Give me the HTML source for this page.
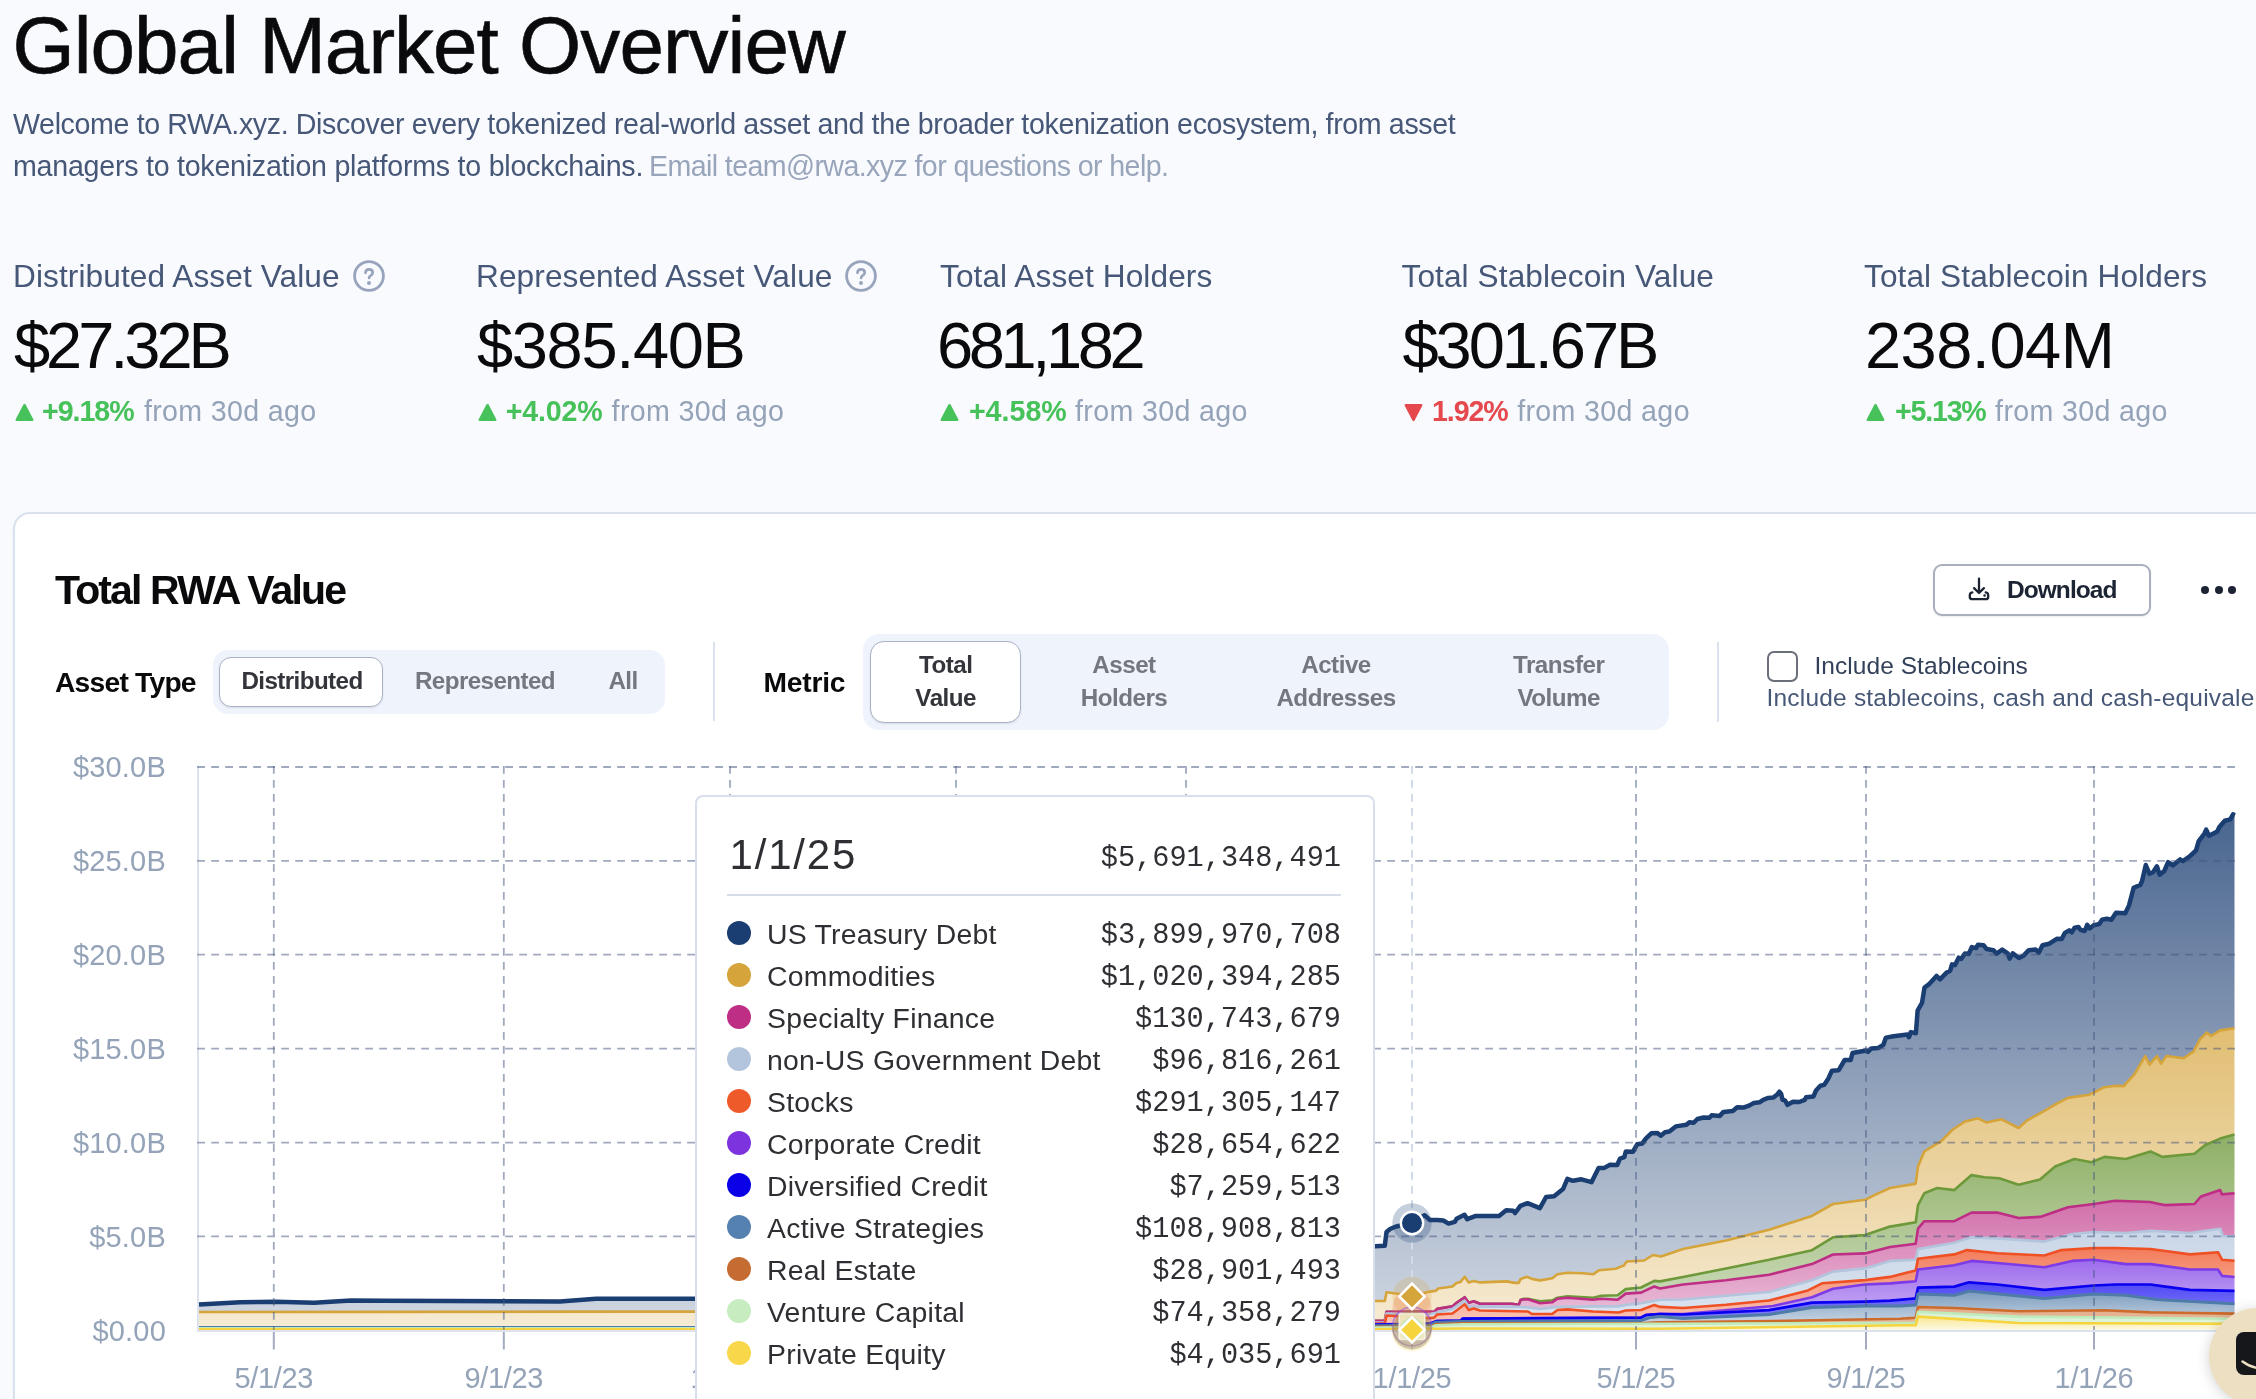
<!DOCTYPE html>
<html><head><meta charset="utf-8"><title>Global Market Overview</title>
<style>
html,body{margin:0;padding:0}
body{width:2256px;height:1399px;overflow:hidden;position:relative;background:#f8fafe;font-family:"Liberation Sans",sans-serif}
</style></head><body>
<div style="position:absolute;left:0;top:0;width:2256px;height:1399px;overflow:hidden;will-change:transform">
<div style="position:absolute;left:12.5px;top:5.8px;font-size:80px;line-height:80px;color:#0a0a0c;font-weight:400;letter-spacing:-0.97px;font-family:'Liberation Sans', sans-serif;white-space:nowrap;-webkit-text-stroke:0.6px #0a0a0c;">Global Market Overview</div>
<div style="position:absolute;left:13.0px;top:109.8px;font-size:28.6px;line-height:28.6px;color:#475777;font-weight:400;letter-spacing:-0.37px;font-family:'Liberation Sans', sans-serif;white-space:nowrap;">Welcome to RWA.xyz. Discover every tokenized real-world asset and the broader tokenization ecosystem, from asset</div>
<div style="position:absolute;left:13.0px;top:151.8px;font-size:28.6px;line-height:28.6px;color:#475777;font-weight:400;letter-spacing:-0.24px;font-family:'Liberation Sans', sans-serif;white-space:nowrap;">managers to tokenization platforms to blockchains.</div>
<div style="position:absolute;left:649.0px;top:151.8px;font-size:28.6px;line-height:28.6px;color:#98a5bb;font-weight:400;letter-spacing:-0.6px;font-family:'Liberation Sans', sans-serif;white-space:nowrap;">Email team@rwa.xyz for questions or help.</div>
<div style="position:absolute;left:13.0px;top:261.1px;font-size:31.6px;line-height:31.6px;color:#475777;font-weight:400;letter-spacing:0.1px;font-family:'Liberation Sans', sans-serif;white-space:nowrap;">Distributed Asset Value</div>
<div style="position:absolute;left:14.0px;top:313.4px;font-size:65px;line-height:65px;color:#0a0a0c;font-weight:400;letter-spacing:-4.05px;font-family:'Liberation Sans', sans-serif;white-space:nowrap;">$27.32B</div>
<svg style="position:absolute;left:15px;top:403px" width="19" height="19" viewBox="0 0 19 19"><path d="M9.5 1 Q10 0.5 10.6 1.4 L18.4 16.5 Q18.8 18 17.2 18 L1.8 18 Q0.2 18 0.6 16.5 L8.4 1.4 Z" fill="#47c25a"/></svg>
<div style="position:absolute;left:42.0px;top:397.4px;font-size:28.6px;line-height:28.6px;color:#47c25a;font-weight:600;letter-spacing:-1.02px;font-family:'Liberation Sans', sans-serif;white-space:nowrap;">+9.18%</div>
<div style="position:absolute;left:143.9px;top:397.4px;font-size:28.6px;line-height:28.6px;color:#94a3b8;font-weight:400;letter-spacing:0.35px;font-family:'Liberation Sans', sans-serif;white-space:nowrap;">from 30d ago</div>
<div style="position:absolute;left:476.0px;top:261.1px;font-size:31.6px;line-height:31.6px;color:#475777;font-weight:400;letter-spacing:0.1px;font-family:'Liberation Sans', sans-serif;white-space:nowrap;">Represented Asset Value</div>
<div style="position:absolute;left:477.0px;top:313.4px;font-size:65px;line-height:65px;color:#0a0a0c;font-weight:400;letter-spacing:-1.35px;font-family:'Liberation Sans', sans-serif;white-space:nowrap;">$385.40B</div>
<svg style="position:absolute;left:478px;top:403px" width="19" height="19" viewBox="0 0 19 19"><path d="M9.5 1 Q10 0.5 10.6 1.4 L18.4 16.5 Q18.8 18 17.2 18 L1.8 18 Q0.2 18 0.6 16.5 L8.4 1.4 Z" fill="#47c25a"/></svg>
<div style="position:absolute;left:505.8px;top:397.4px;font-size:28.6px;line-height:28.6px;color:#47c25a;font-weight:600;letter-spacing:-0.18px;font-family:'Liberation Sans', sans-serif;white-space:nowrap;">+4.02%</div>
<div style="position:absolute;left:611.6px;top:397.4px;font-size:28.6px;line-height:28.6px;color:#94a3b8;font-weight:400;letter-spacing:0.35px;font-family:'Liberation Sans', sans-serif;white-space:nowrap;">from 30d ago</div>
<div style="position:absolute;left:940.0px;top:261.1px;font-size:31.6px;line-height:31.6px;color:#475777;font-weight:400;letter-spacing:0.1px;font-family:'Liberation Sans', sans-serif;white-space:nowrap;">Total Asset Holders</div>
<div style="position:absolute;left:937.0px;top:313.4px;font-size:65px;line-height:65px;color:#0a0a0c;font-weight:400;letter-spacing:-4.4px;font-family:'Liberation Sans', sans-serif;white-space:nowrap;">681,182</div>
<svg style="position:absolute;left:940px;top:403px" width="19" height="19" viewBox="0 0 19 19"><path d="M9.5 1 Q10 0.5 10.6 1.4 L18.4 16.5 Q18.8 18 17.2 18 L1.8 18 Q0.2 18 0.6 16.5 L8.4 1.4 Z" fill="#47c25a"/></svg>
<div style="position:absolute;left:968.9px;top:397.4px;font-size:28.6px;line-height:28.6px;color:#47c25a;font-weight:600;letter-spacing:0.02px;font-family:'Liberation Sans', sans-serif;white-space:nowrap;">+4.58%</div>
<div style="position:absolute;left:1075.0px;top:397.4px;font-size:28.6px;line-height:28.6px;color:#94a3b8;font-weight:400;letter-spacing:0.35px;font-family:'Liberation Sans', sans-serif;white-space:nowrap;">from 30d ago</div>
<div style="position:absolute;left:1401.5px;top:261.1px;font-size:31.6px;line-height:31.6px;color:#475777;font-weight:400;letter-spacing:0.1px;font-family:'Liberation Sans', sans-serif;white-space:nowrap;">Total Stablecoin Value</div>
<div style="position:absolute;left:1402.5px;top:313.4px;font-size:65px;line-height:65px;color:#0a0a0c;font-weight:400;letter-spacing:-3.06px;font-family:'Liberation Sans', sans-serif;white-space:nowrap;">$301.67B</div>
<svg style="position:absolute;left:1403.5px;top:403px" width="19" height="19" viewBox="0 0 19 19"><path d="M9.5 18 Q10 18.5 10.6 17.6 L18.4 2.5 Q18.8 1 17.2 1 L1.8 1 Q0.2 1 0.6 2.5 L8.4 17.6 Z" fill="#e5484d"/></svg>
<div style="position:absolute;left:1432.0px;top:397.4px;font-size:28.6px;line-height:28.6px;color:#e5484d;font-weight:600;letter-spacing:-1.1px;font-family:'Liberation Sans', sans-serif;white-space:nowrap;">1.92%</div>
<div style="position:absolute;left:1517.2px;top:397.4px;font-size:28.6px;line-height:28.6px;color:#94a3b8;font-weight:400;letter-spacing:0.35px;font-family:'Liberation Sans', sans-serif;white-space:nowrap;">from 30d ago</div>
<div style="position:absolute;left:1864.0px;top:261.1px;font-size:31.6px;line-height:31.6px;color:#475777;font-weight:400;letter-spacing:0.1px;font-family:'Liberation Sans', sans-serif;white-space:nowrap;">Total Stablecoin Holders</div>
<div style="position:absolute;left:1865.0px;top:313.4px;font-size:65px;line-height:65px;color:#0a0a0c;font-weight:400;letter-spacing:-0.53px;font-family:'Liberation Sans', sans-serif;white-space:nowrap;">238.04M</div>
<svg style="position:absolute;left:1866px;top:403px" width="19" height="19" viewBox="0 0 19 19"><path d="M9.5 1 Q10 0.5 10.6 1.4 L18.4 16.5 Q18.8 18 17.2 18 L1.8 18 Q0.2 18 0.6 16.5 L8.4 1.4 Z" fill="#47c25a"/></svg>
<div style="position:absolute;left:1895.0px;top:397.4px;font-size:28.6px;line-height:28.6px;color:#47c25a;font-weight:600;letter-spacing:-1.2px;font-family:'Liberation Sans', sans-serif;white-space:nowrap;">+5.13%</div>
<div style="position:absolute;left:1995.1px;top:397.4px;font-size:28.6px;line-height:28.6px;color:#94a3b8;font-weight:400;letter-spacing:0.35px;font-family:'Liberation Sans', sans-serif;white-space:nowrap;">from 30d ago</div>
<svg style="position:absolute;left:353px;top:260px" width="32" height="32" viewBox="0 0 32 32"><circle cx="16" cy="16" r="14.4" fill="none" stroke="#98a4bc" stroke-width="2.8"/><path d="M12.5 12.8 Q12.6 9.3 16.1 9.3 Q19.7 9.3 19.7 12.6 Q19.7 14.6 17.6 15.6 Q16.1 16.4 16.1 18" fill="none" stroke="#98a4bc" stroke-width="2.7" stroke-linecap="round"/><circle cx="16" cy="22.9" r="2" fill="#98a4bc"/></svg>
<svg style="position:absolute;left:845px;top:260px" width="32" height="32" viewBox="0 0 32 32"><circle cx="16" cy="16" r="14.4" fill="none" stroke="#98a4bc" stroke-width="2.8"/><path d="M12.5 12.8 Q12.6 9.3 16.1 9.3 Q19.7 9.3 19.7 12.6 Q19.7 14.6 17.6 15.6 Q16.1 16.4 16.1 18" fill="none" stroke="#98a4bc" stroke-width="2.7" stroke-linecap="round"/><circle cx="16" cy="22.9" r="2" fill="#98a4bc"/></svg>
<div style="position:absolute;left:13px;top:512px;width:2400px;height:1200px;background:#fff;border:2px solid #dae1ee;border-radius:17px;box-shadow:0 1px 3px rgba(30,40,70,0.05)"></div>
<div style="position:absolute;left:55.0px;top:569.6px;font-size:41px;line-height:41px;color:#0a0a0c;font-weight:600;letter-spacing:-1.87px;font-family:'Liberation Sans', sans-serif;white-space:nowrap;">Total RWA Value</div>
<div style="position:absolute;left:1933px;top:564px;width:214px;height:48px;border:2px solid #a9afbd;border-radius:9px;background:#fff;box-shadow:0 1px 2px rgba(0,0,0,0.08)"></div>
<svg style="position:absolute;left:1966px;top:576px" width="26" height="26" viewBox="0 0 26 26"><path d="M13 2.6 V16.6 M8.1 12.1 L13 17 L17.9 12.1" fill="none" stroke="#1c2333" stroke-width="2.3" stroke-linecap="round" stroke-linejoin="round"/><path d="M6.3 16.3 Q3.8 16.6 3.8 19.2 V20.9 Q3.8 23.2 6.3 23.2 H19.7 Q22.2 23.2 22.2 20.9 V19.2 Q22.2 16.6 19.7 16.3" fill="none" stroke="#1c2333" stroke-width="2.3" stroke-linecap="round"/><circle cx="18.6" cy="19.5" r="1.3" fill="#1c2333"/></svg>
<div style="position:absolute;left:2007.0px;top:577.7px;font-size:24.5px;line-height:24.5px;color:#1c2333;font-weight:600;letter-spacing:-0.95px;font-family:'Liberation Sans', sans-serif;white-space:nowrap;">Download</div>
<div style="position:absolute;left:2201.0px;top:586.0px;width:8px;height:8px;border-radius:50%;background:#1c2333"></div>
<div style="position:absolute;left:2214.7px;top:586.0px;width:8px;height:8px;border-radius:50%;background:#1c2333"></div>
<div style="position:absolute;left:2228.0px;top:586.0px;width:8px;height:8px;border-radius:50%;background:#1c2333"></div>
<div style="position:absolute;left:55.0px;top:668.1px;font-size:28.2px;line-height:28.2px;color:#0a0a0c;font-weight:700;letter-spacing:-0.75px;font-family:'Liberation Sans', sans-serif;white-space:nowrap;">Asset Type</div>
<div style="position:absolute;left:213px;top:650px;width:452px;height:64px;background:#eff3fb;border-radius:15px"></div>
<div style="position:absolute;left:219px;top:656.5px;width:162px;height:48px;background:#fff;border:1.6px solid #a8b2c5;border-radius:12px;box-shadow:0 1px 2px rgba(20,30,60,0.10)"></div>
<div style="position:absolute;left:241.5px;top:669.3px;font-size:24.2px;line-height:24.2px;color:#33353b;font-weight:600;letter-spacing:-0.6px;font-family:'Liberation Sans', sans-serif;white-space:nowrap;">Distributed</div>
<div style="position:absolute;left:415.0px;top:669.3px;font-size:24.2px;line-height:24.2px;color:#75777e;font-weight:600;letter-spacing:-0.6px;font-family:'Liberation Sans', sans-serif;white-space:nowrap;">Represented</div>
<div style="position:absolute;left:608.5px;top:669.3px;font-size:24.2px;line-height:24.2px;color:#75777e;font-weight:600;letter-spacing:-0.6px;font-family:'Liberation Sans', sans-serif;white-space:nowrap;">All</div>
<div style="position:absolute;left:712.5px;top:642px;width:2px;height:79px;background:#dbe2ef"></div>
<div style="position:absolute;left:763.5px;top:668.1px;font-size:28.2px;line-height:28.2px;color:#0a0a0c;font-weight:700;letter-spacing:-0.2px;font-family:'Liberation Sans', sans-serif;white-space:nowrap;">Metric</div>
<div style="position:absolute;left:863px;top:634px;width:806px;height:96px;background:#eff3fb;border-radius:16px"></div>
<div style="position:absolute;left:870px;top:640.5px;width:149px;height:80px;background:#fff;border:1.6px solid #a8b2c5;border-radius:14px;box-shadow:0 1px 2px rgba(20,30,60,0.10)"></div>
<div style="position:absolute;left:745.7px;width:400px;text-align:center;top:653.2px;font-size:24.2px;line-height:24.2px;color:#33353b;font-weight:600;letter-spacing:-0.5px;font-family:'Liberation Sans', sans-serif;white-space:nowrap">Total</div>
<div style="position:absolute;left:745.7px;width:400px;text-align:center;top:685.5px;font-size:24.2px;line-height:24.2px;color:#33353b;font-weight:600;letter-spacing:-0.5px;font-family:'Liberation Sans', sans-serif;white-space:nowrap">Value</div>
<div style="position:absolute;left:924.0px;width:400px;text-align:center;top:653.2px;font-size:24.2px;line-height:24.2px;color:#75777e;font-weight:600;letter-spacing:-0.5px;font-family:'Liberation Sans', sans-serif;white-space:nowrap">Asset</div>
<div style="position:absolute;left:924.0px;width:400px;text-align:center;top:685.5px;font-size:24.2px;line-height:24.2px;color:#75777e;font-weight:600;letter-spacing:-0.5px;font-family:'Liberation Sans', sans-serif;white-space:nowrap">Holders</div>
<div style="position:absolute;left:1136.0px;width:400px;text-align:center;top:653.2px;font-size:24.2px;line-height:24.2px;color:#75777e;font-weight:600;letter-spacing:-0.5px;font-family:'Liberation Sans', sans-serif;white-space:nowrap">Active</div>
<div style="position:absolute;left:1136.0px;width:400px;text-align:center;top:685.5px;font-size:24.2px;line-height:24.2px;color:#75777e;font-weight:600;letter-spacing:-0.5px;font-family:'Liberation Sans', sans-serif;white-space:nowrap">Addresses</div>
<div style="position:absolute;left:1358.7px;width:400px;text-align:center;top:653.2px;font-size:24.2px;line-height:24.2px;color:#75777e;font-weight:600;letter-spacing:-0.5px;font-family:'Liberation Sans', sans-serif;white-space:nowrap">Transfer</div>
<div style="position:absolute;left:1358.7px;width:400px;text-align:center;top:685.5px;font-size:24.2px;line-height:24.2px;color:#75777e;font-weight:600;letter-spacing:-0.5px;font-family:'Liberation Sans', sans-serif;white-space:nowrap">Volume</div>
<div style="position:absolute;left:1716.7px;top:642px;width:2px;height:80px;background:#dbe2ef"></div>
<div style="position:absolute;left:1767px;top:650.5px;width:27px;height:27px;border:2px solid #6b6f7a;border-radius:7px;background:#fff"></div>
<div style="position:absolute;left:1814.5px;top:653.6px;font-size:24.5px;line-height:24.5px;color:#334059;font-weight:400;letter-spacing:0.05px;font-family:'Liberation Sans', sans-serif;white-space:nowrap;">Include Stablecoins</div>
<div style="position:absolute;left:1766.5px;top:685.6px;font-size:24.5px;line-height:24.5px;color:#475777;font-weight:400;letter-spacing:0.2px;font-family:'Liberation Sans', sans-serif;white-space:nowrap;">Include stablecoins, cash and cash-equivalents</div>

<svg style="position:absolute;left:0;top:0" width="2256" height="1399" viewBox="0 0 2256 1399"><defs><linearGradient id="g_navy" x1="0" y1="0" x2="0" y2="1"><stop offset="0" stop-color="#1b3e72" stop-opacity="0.8"/><stop offset="1" stop-color="#1b3e72" stop-opacity="0.22"/></linearGradient><linearGradient id="g_gold" x1="0" y1="0" x2="0" y2="1"><stop offset="0" stop-color="#d5a43a" stop-opacity="0.72"/><stop offset="1" stop-color="#d5a43a" stop-opacity="0.22"/></linearGradient><linearGradient id="g_green" x1="0" y1="0" x2="0" y2="1"><stop offset="0" stop-color="#6e993a" stop-opacity="0.78"/><stop offset="1" stop-color="#6e993a" stop-opacity="0.3"/></linearGradient><linearGradient id="g_magenta" x1="0" y1="0" x2="0" y2="1"><stop offset="0" stop-color="#bd2e84" stop-opacity="0.72"/><stop offset="1" stop-color="#bd2e84" stop-opacity="0.28"/></linearGradient><linearGradient id="g_nonus" x1="0" y1="0" x2="0" y2="1"><stop offset="0" stop-color="#b3c5dd" stop-opacity="0.7"/><stop offset="1" stop-color="#b3c5dd" stop-opacity="0.45"/></linearGradient><linearGradient id="g_orange" x1="0" y1="0" x2="0" y2="1"><stop offset="0" stop-color="#ef5024" stop-opacity="0.75"/><stop offset="1" stop-color="#ef5024" stop-opacity="0.3"/></linearGradient><linearGradient id="g_purple" x1="0" y1="0" x2="0" y2="1"><stop offset="0" stop-color="#7c3be6" stop-opacity="0.75"/><stop offset="1" stop-color="#7c3be6" stop-opacity="0.35"/></linearGradient><linearGradient id="g_blue" x1="0" y1="0" x2="0" y2="1"><stop offset="0" stop-color="#0a00f0" stop-opacity="0.72"/><stop offset="1" stop-color="#0a00f0" stop-opacity="0.45"/></linearGradient><linearGradient id="g_steel" x1="0" y1="0" x2="0" y2="1"><stop offset="0" stop-color="#4f7ba8" stop-opacity="0.75"/><stop offset="1" stop-color="#4f7ba8" stop-opacity="0.25"/></linearGradient><linearGradient id="g_brown" x1="0" y1="0" x2="0" y2="1"><stop offset="0" stop-color="#cc6b2c" stop-opacity="0.55"/><stop offset="1" stop-color="#cc6b2c" stop-opacity="0.45"/></linearGradient><linearGradient id="g_lgreen" x1="0" y1="0" x2="0" y2="1"><stop offset="0" stop-color="#bfeabb" stop-opacity="0.6"/><stop offset="1" stop-color="#bfeabb" stop-opacity="0.5"/></linearGradient><linearGradient id="g_yellow" x1="0" y1="0" x2="0" y2="1"><stop offset="0" stop-color="#f6d43e" stop-opacity="0.55"/><stop offset="1" stop-color="#f6d43e" stop-opacity="0.15"/></linearGradient></defs><line x1="198" y1="766" x2="198" y2="1331" stroke="#dde3ee" stroke-width="2"/><path d="M199 1304.6 L240 1302.3 L276 1301.7 L314 1302.8 L351 1300.5 L450 1301 L560 1301.4 L596 1298.7 L695 1298.7 L1375 1246.2 L1384.8 1245.8 L1386.5 1232 L1390.1 1229 L1395.4 1226.7 L1400 1225.7 L1412 1223 L1424.6 1215.2 L1430 1220.1 L1436.1 1220.1 L1437.1 1220.1 L1438.2 1220.2 L1443.3 1220.5 L1448.6 1223.6 L1452.4 1222.6 L1454.8 1221.9 L1456.5 1219 L1456.6 1218.8 L1460.6 1216.8 L1464.5 1214.8 L1464.7 1215.1 L1467.2 1219.2 L1468.7 1218.6 L1473.8 1216.6 L1475.2 1216.1 L1480 1216.1 L1499.1 1216.1 L1506.2 1210.3 L1506.5 1210.3 L1513.3 1210.8 L1514.6 1212.4 L1515.1 1213 L1518.7 1208.2 L1520.4 1205.9 L1520.7 1205.8 L1526.8 1203.5 L1527.5 1203.2 L1531.9 1204.9 L1539.9 1208.1 L1540.1 1207.7 L1546.1 1197 L1552.3 1196.4 L1554.1 1196.2 L1557.4 1193.6 L1563 1189.1 L1567.4 1178.9 L1567.6 1179 L1572.9 1180.8 L1581.4 1179.3 L1582.9 1179.7 L1591.5 1182.2 L1593.1 1179 L1598.6 1167.9 L1599.2 1167.9 L1604.3 1167.9 L1610 1164.7 L1615.5 1164.9 L1617.2 1165 L1620 1158.6 L1623.7 1157.4 L1624.3 1157.2 L1625.8 1151.5 L1626.8 1151.5 L1632.9 1151.8 L1637.2 1144.3 L1642.2 1143.6 L1644.1 1141 L1645.8 1138.6 L1651.5 1133.2 L1653 1133.1 L1657.2 1132.9 L1660.8 1135.7 L1661 1135.5 L1665 1132.2 L1669.4 1131.5 L1675.8 1126.4 L1683 1125.3 L1686.5 1124.7 L1689.4 1122.2 L1693.7 1122.8 L1697.4 1119 L1703.7 1117.5 L1709.2 1117.8 L1711.7 1115.3 L1719.8 1115.9 L1723.5 1111.9 L1726 1111.7 L1732.8 1111 L1737.2 1107.2 L1743.4 1107.6 L1749.6 1105.4 L1753.9 1102.9 L1759.5 1102.3 L1763.2 1099.8 L1768.2 1097.9 L1769 1097.9 L1773.2 1097.6 L1776.9 1094.8 L1779.4 1091.7 L1781.2 1093.9 L1782.5 1099.8 L1785 1100.4 L1787.5 1104.8 L1793 1101.7 L1799.2 1102 L1804.8 1099.8 L1806.1 1097.3 L1812 1096.6 L1813.5 1096.4 L1816 1090.5 L1820.4 1085.8 L1824.1 1084.9 L1828.4 1078.4 L1831.9 1070.7 L1833 1070.6 L1838.7 1070.2 L1844.7 1060 L1850.7 1060 L1852.5 1053 L1865 1050.7 L1866.2 1050.5 L1867.9 1051.8 L1871.3 1048.4 L1876 1048.1 L1878.2 1048 L1883.3 1044.9 L1885.9 1037.6 L1890 1036.9 L1893.6 1036.3 L1907.4 1034.6 L1909 1037.2 L1910.8 1032.1 L1915.7 1033.3 L1915.9 1033.3 L1917.6 1010.6 L1918 1009.9 L1922 1002.9 L1924.3 988.7 L1924.5 987.5 L1928.8 984.4 L1936.5 975.9 L1940 979.3 L1941.5 977.8 L1946.8 972.4 L1950.2 970.7 L1952 964.3 L1952.2 964.4 L1955 965.1 L1958.7 957.7 L1961.2 958.9 L1964.9 953.4 L1965 953.4 L1968.7 954 L1971.8 947.1 L1976.1 948.1 L1978 944.7 L1983.5 945.3 L1986.5 948.9 L1986.6 949 L1993.5 950.2 L1996.6 953.7 L2001.5 950.1 L2002.2 949.6 L2007.7 953.3 L2009.6 958.6 L2012.7 953.3 L2018.6 957.8 L2018.9 958 L2023.3 955.8 L2027.2 951.8 L2028.8 950.2 L2035.7 949.6 L2038.8 952.7 L2042.5 945.3 L2044.4 944.9 L2049.3 943.7 L2056.8 938.8 L2057.2 938.8 L2061.7 939.1 L2064.8 932.9 L2068 931.1 L2069.2 930.4 L2071.7 932.3 L2074.8 927.6 L2078.5 927 L2080.4 929.8 L2084.7 931 L2087.2 924.8 L2089.4 928.1 L2089.7 928.5 L2094 925 L2095.6 924.9 L2099.3 924 L2102.1 919.8 L2104.4 919.3 L2106.7 918.8 L2111.4 919.8 L2116 912.8 L2123.7 913.2 L2125.3 913.3 L2129 905.4 L2133.7 887.7 L2134.4 887.4 L2140.2 884.9 L2142 881.2 L2145.2 867.6 L2145.8 865 L2149.5 873.8 L2153.2 871.9 L2156.9 866.3 L2157 866.6 L2159.7 874.7 L2161 873.7 L2164.3 871 L2166.6 865.7 L2168.1 862.2 L2172.7 865.4 L2180.1 859.4 L2182.9 861.2 L2183.7 860.6 L2189.4 856.6 L2193.5 852.8 L2196 850.5 L2198.7 841.2 L2200 839.5 L2204.3 833.8 L2206.2 829.6 L2206.8 830.9 L2209 835.7 L2211 834.7 L2217.3 831.5 L2219.2 827.3 L2220 826.4 L2224.8 820.8 L2230.3 819.4 L2233.1 814.3 L2234.5 815.5 L2234.5 1028.2 L2233.1 1028.4 L2230.3 1028.8 L2224.8 1029.7 L2220 1030.4 L2219.2 1030.9 L2217.3 1032.1 L2211 1036 L2209 1034.4 L2206.8 1032.6 L2206.2 1033.2 L2204.3 1035.1 L2200 1039.3 L2198.7 1041.7 L2196 1046.8 L2193.5 1051.5 L2189.4 1054.3 L2183.7 1058.2 L2182.9 1058.1 L2180.1 1057.7 L2172.7 1056.8 L2168.1 1056.2 L2166.6 1056 L2164.3 1059.1 L2161 1063.6 L2159.7 1061.2 L2157 1056.1 L2156.9 1056.2 L2153.2 1060.5 L2149.5 1064.7 L2145.8 1057.3 L2145.2 1056.1 L2142 1061.5 L2140.2 1064.5 L2134.4 1074.3 L2133.7 1075.1 L2129 1080.3 L2125.3 1084.3 L2123.7 1086.1 L2116 1085.8 L2111.4 1086.4 L2106.7 1086.9 L2104.4 1087.2 L2102.1 1088.4 L2099.3 1089.8 L2095.6 1091.6 L2094 1092.4 L2089.7 1094.6 L2089.4 1094.7 L2087.2 1095 L2084.7 1095.4 L2080.4 1096 L2078.5 1096.3 L2074.8 1096.9 L2071.7 1097.3 L2069.2 1097.7 L2068 1097.9 L2064.8 1099.5 L2061.7 1101 L2057.2 1103.3 L2056.8 1103.5 L2049.3 1107.9 L2044.4 1110.8 L2042.5 1111.9 L2038.8 1113.9 L2035.7 1115.7 L2028.8 1119.5 L2027.2 1120.4 L2023.3 1123.8 L2018.9 1127.7 L2018.6 1128 L2012.7 1125 L2009.6 1123.4 L2007.7 1122.5 L2002.2 1119.7 L2001.5 1119.3 L1996.6 1120.4 L1993.5 1121.1 L1986.6 1122.6 L1986.5 1122.6 L1983.5 1121.1 L1978 1118.3 L1976.1 1118.8 L1971.8 1119.8 L1968.7 1120.6 L1965 1121.5 L1964.9 1121.6 L1961.2 1124 L1958.7 1125.7 L1955 1128.1 L1952.2 1130 L1952 1130.2 L1950.2 1132 L1946.8 1135.5 L1941.5 1140.8 L1940 1141.7 L1936.5 1143.9 L1928.8 1148.7 L1924.5 1151.4 L1924.3 1151.5 L1922 1157 L1918 1166.5 L1917.6 1169.5 L1915.9 1182.2 L1915.7 1183.7 L1910.8 1184.5 L1909 1184.8 L1907.4 1185.1 L1893.6 1187.4 L1890 1188 L1885.9 1189.9 L1883.3 1191.1 L1878.2 1193.4 L1876 1194.4 L1871.3 1196.7 L1867.9 1198.4 L1866.2 1199.2 L1865 1199.8 L1852.5 1201.4 L1850.7 1201.7 L1844.7 1202.5 L1838.7 1203.3 L1833 1204 L1831.9 1204.6 L1828.4 1206.6 L1824.1 1209 L1820.4 1211.1 L1816 1213.6 L1813.5 1215.1 L1812 1215.9 L1806.1 1217.8 L1804.8 1218.2 L1799.2 1220 L1793 1222 L1787.5 1223.8 L1785 1224.6 L1782.5 1225.4 L1781.2 1225.9 L1779.4 1226.4 L1776.9 1227.2 L1773.2 1228.4 L1769 1229.8 L1768.2 1230 L1763.2 1231.2 L1759.5 1232.2 L1753.9 1233.6 L1749.6 1234.6 L1743.4 1236.2 L1737.2 1237.7 L1732.8 1238.8 L1726 1240.5 L1723.5 1241 L1719.8 1241.7 L1711.7 1243.4 L1709.2 1243.9 L1703.7 1245 L1697.4 1246.2 L1693.7 1247 L1689.4 1247.8 L1686.5 1248.4 L1683 1249.1 L1675.8 1251.6 L1669.4 1253.7 L1665 1255.2 L1661 1256.6 L1660.8 1256.6 L1657.2 1255.8 L1653 1255 L1651.5 1255.9 L1645.8 1259.4 L1644.1 1260.5 L1642.2 1260.6 L1637.2 1260.9 L1632.9 1261.1 L1626.8 1261.5 L1625.8 1262.8 L1624.3 1264.8 L1623.7 1265.6 L1620 1267 L1617.2 1268.1 L1615.5 1268.7 L1610 1269.2 L1604.3 1269.7 L1599.2 1270.2 L1598.6 1270.6 L1593.1 1274.3 L1591.5 1274.1 L1582.9 1273.3 L1581.4 1273.2 L1572.9 1272.9 L1567.6 1272.7 L1567.4 1272.7 L1563 1273.4 L1557.4 1274.3 L1554.1 1276.9 L1552.3 1278.3 L1546.1 1279.4 L1540.1 1280.4 L1539.9 1280.4 L1531.9 1278.9 L1527.5 1277.1 L1526.8 1276.8 L1520.7 1278.9 L1520.4 1279.5 L1518.7 1282.9 L1515.1 1282.9 L1514.6 1282.9 L1513.3 1282.7 L1506.5 1281.4 L1506.2 1281.4 L1499.1 1281.7 L1480 1282.4 L1475.2 1281.2 L1473.8 1280.9 L1468.7 1282.4 L1467.2 1280.3 L1464.7 1276.8 L1464.5 1277 L1460.6 1281.9 L1456.6 1282.9 L1456.5 1282.9 L1454.8 1284.4 L1452.4 1286.5 L1448.6 1287 L1443.3 1287.8 L1438.2 1288.5 L1437.1 1289.6 L1436.1 1290.6 L1430 1291.6 L1424.6 1292.9 L1412 1296 L1400 1294 L1395.4 1293.4 L1390.1 1292.8 L1386.5 1292.3 L1384.8 1301 L1375 1301 L695 1311.6 L596 1311.7 L560 1311.7 L450 1311.8 L351 1311.9 L314 1311.9 L276 1311.9 L240 1312 L199 1312 Z" fill="url(#g_navy)"/><path d="M199 1312 L695 1311.6 L1375 1301 L1384.8 1301 L1386.5 1292.3 L1400 1294 L1412 1296 L1430 1291.6 L1434.1 1290.9 L1436.1 1290.6 L1437.1 1289.6 L1438.2 1288.5 L1452.4 1286.5 L1456.5 1282.9 L1460.6 1281.9 L1464.7 1276.8 L1468.7 1282.4 L1473.8 1280.9 L1480 1282.4 L1506.5 1281.4 L1511.6 1282.3 L1514.6 1282.9 L1518.7 1282.9 L1520.7 1278.9 L1523.8 1277.8 L1526.8 1276.8 L1527.9 1277.3 L1531.9 1278.9 L1540.1 1280.4 L1552.3 1278.3 L1557.4 1274.3 L1567.6 1272.7 L1582.9 1273.3 L1593.1 1274.3 L1599.2 1270.2 L1601.3 1270 L1615.5 1268.7 L1617.6 1267.9 L1623.7 1265.6 L1625.7 1263 L1626.8 1261.5 L1641 1260.7 L1644.1 1260.5 L1653 1255 L1654.3 1255.3 L1660 1256.4 L1661 1256.6 L1683 1249.1 L1726 1240.5 L1769 1229.8 L1812 1215.9 L1833 1204 L1865 1199.8 L1876 1194.4 L1890 1188 L1915.7 1183.7 L1918 1166.5 L1924.3 1151.5 L1937.2 1143.5 L1941.5 1140.8 L1952.2 1130 L1954.3 1128.6 L1965 1121.5 L1971.5 1119.9 L1978 1118.3 L1984.3 1121.5 L1986.5 1122.6 L1999.3 1119.8 L2001.5 1119.3 L2018.6 1128 L2027.2 1120.4 L2040 1113.3 L2044.4 1110.8 L2055.1 1104.5 L2057.2 1103.3 L2068 1097.9 L2074.4 1096.9 L2089.4 1094.7 L2091.5 1093.7 L2104.4 1087.2 L2116 1085.8 L2123.7 1086.1 L2125.8 1083.8 L2134.4 1074.3 L2145.2 1056.1 L2149.5 1064.7 L2150.5 1063.6 L2157 1056.1 L2161 1063.6 L2162.3 1061.8 L2166.6 1056 L2183.7 1058.2 L2193.5 1051.5 L2194.5 1049.6 L2200 1039.3 L2205.2 1034.2 L2206.8 1032.6 L2211 1036 L2220 1030.4 L2220.2 1030.4 L2234.5 1028.2 L2234.5 1134.4 L2220.2 1138.6 L2220 1138.7 L2211 1142.5 L2206.8 1144.3 L2205.2 1145 L2200 1149.2 L2194.5 1153.7 L2193.5 1153.8 L2183.7 1154.8 L2166.6 1156.5 L2162.3 1156.9 L2161 1156.3 L2157 1154.5 L2150.5 1151.5 L2149.5 1151.8 L2145.2 1153.1 L2134.4 1156.4 L2125.8 1159 L2123.7 1158.8 L2116 1158 L2104.4 1156.9 L2091.5 1162.2 L2089.4 1161.8 L2074.4 1159 L2068 1161.5 L2057.2 1165.7 L2055.1 1166.5 L2044.4 1175.6 L2040 1179.4 L2027.2 1182.6 L2018.6 1184.8 L2001.5 1179 L1999.3 1178.3 L1986.5 1177.4 L1984.3 1177.2 L1978 1176.2 L1971.5 1175.1 L1965 1180.8 L1954.3 1190.1 L1952.2 1189.8 L1941.5 1188.5 L1937.2 1188 L1924.3 1193.3 L1918 1205.1 L1915.7 1222.3 L1890 1226.6 L1876 1231.4 L1865 1235.1 L1833 1237.3 L1812 1250.2 L1769 1259.8 L1726 1268.4 L1683 1277 L1661 1281.2 L1660 1281.4 L1654.3 1280.9 L1653 1281.5 L1644.1 1286 L1641 1287.5 L1626.8 1289 L1625.7 1289.1 L1623.7 1290.6 L1617.6 1295.2 L1615.5 1295.3 L1601.3 1295.7 L1599.2 1296.2 L1593.1 1297.7 L1582.9 1297.1 L1567.6 1296.2 L1557.4 1297.7 L1552.3 1300.3 L1540.1 1301.3 L1531.9 1299.6 L1527.9 1298.7 L1526.8 1298.7 L1523.8 1298.7 L1520.7 1299.8 L1518.7 1304.9 L1514.6 1304.3 L1511.6 1303.8 L1506.5 1303.8 L1480 1303.8 L1473.8 1301.3 L1468.7 1302.8 L1464.7 1297.2 L1460.6 1300 L1456.5 1302.8 L1452.4 1306.4 L1438.2 1308.7 L1437.1 1308.9 L1436.1 1309.9 L1434.1 1312 L1430 1311.5 L1412 1311.6 L1400 1311.7 L1386.5 1311.8 L1384.8 1320.8 L1375 1320.8 L695 1327.6 L199 1327.6 Z" fill="url(#g_gold)"/><path d="M199 1327.6 L695 1327.6 L1375 1320.8 L1384.8 1320.8 L1386.5 1311.8 L1430 1311.5 L1434.1 1312 L1437.1 1308.9 L1452.4 1306.4 L1456.5 1302.8 L1464.7 1297.2 L1468.7 1302.8 L1473.8 1301.3 L1480 1303.8 L1511.6 1303.8 L1518.7 1304.9 L1520.7 1299.8 L1523.8 1298.7 L1527.9 1298.7 L1540.1 1301.3 L1552.3 1300.3 L1557.4 1297.7 L1567.6 1296.2 L1593.1 1297.7 L1601.3 1295.7 L1617.6 1295.2 L1625.7 1289.1 L1641 1287.5 L1654.3 1280.9 L1660 1281.4 L1683 1277 L1726 1268.4 L1769 1259.8 L1812 1250.2 L1833 1237.3 L1865 1235.1 L1890 1226.6 L1915.7 1222.3 L1918 1205.1 L1924.3 1193.3 L1937.2 1188 L1954.3 1190.1 L1971.5 1175.1 L1984.3 1177.2 L1997.2 1178.1 L1999.3 1178.3 L2018.6 1184.8 L2040 1179.4 L2055.1 1166.5 L2068 1161.5 L2074.4 1159 L2091.5 1162.2 L2093.7 1161.3 L2104.4 1156.9 L2115.1 1158 L2125.8 1159 L2150 1151.7 L2150.5 1151.5 L2162.3 1156.9 L2164.4 1156.7 L2194.5 1153.7 L2200.9 1148.5 L2205.2 1145 L2220.2 1138.6 L2222 1138.1 L2234.5 1134.4 L2234.5 1193.3 L2222 1194.4 L2220.2 1190.1 L2205.2 1195.1 L2200.9 1196.5 L2194.5 1204 L2164.4 1205.1 L2162.3 1204.6 L2150.5 1202.1 L2150 1202 L2125.8 1201.2 L2115.1 1200.8 L2104.4 1202.4 L2093.7 1204 L2091.5 1204.3 L2074.4 1206.5 L2068 1207.3 L2055.1 1211.7 L2040 1216.9 L2018.6 1218 L1999.3 1213.1 L1997.2 1212.6 L1984.3 1212.6 L1971.5 1212.6 L1954.3 1221.2 L1937.2 1221.2 L1924.3 1221.2 L1918 1228.7 L1915.7 1243.7 L1890 1247 L1865 1253.4 L1833 1254.5 L1812 1264.1 L1769 1274.8 L1726 1280.2 L1683 1284.5 L1660 1288.5 L1654.3 1286.5 L1641 1292.6 L1625.7 1293.6 L1617.6 1299.8 L1601.3 1298.7 L1593.1 1299.8 L1567.6 1297.7 L1557.4 1298.7 L1552.3 1302.3 L1540.1 1303.3 L1527.9 1299.2 L1523.8 1299.5 L1520.7 1299.8 L1518.7 1304.9 L1511.6 1303.8 L1480 1303.8 L1473.8 1301.3 L1468.7 1302.8 L1464.7 1297.2 L1456.5 1302.8 L1452.4 1306.4 L1437.1 1308.9 L1434.1 1312 L1430 1311.5 L1386.5 1311.8 L1384.8 1320.8 L1375 1320.8 L695 1327.6 L199 1327.6 Z" fill="url(#g_green)"/><path d="M199 1327.6 L695 1327.6 L1375 1320.8 L1384.8 1320.8 L1386.5 1311.8 L1430 1311.5 L1434.1 1312 L1437.1 1308.9 L1452.4 1306.4 L1456.5 1302.8 L1464.7 1297.2 L1468.7 1302.8 L1473.8 1301.3 L1480 1303.8 L1511.6 1303.8 L1518.7 1304.9 L1520.7 1299.8 L1527.9 1299.2 L1540.1 1303.3 L1552.3 1302.3 L1557.4 1298.7 L1567.6 1297.7 L1593.1 1299.8 L1601.3 1298.7 L1617.6 1299.8 L1625.7 1293.6 L1641 1292.6 L1654.3 1286.5 L1660 1288.5 L1683 1284.5 L1726 1280.2 L1769 1274.8 L1812 1264.1 L1833 1254.5 L1865 1253.4 L1890 1247 L1915.7 1243.7 L1918 1228.7 L1924.3 1221.2 L1954.3 1221.2 L1971.5 1212.6 L1997.2 1212.6 L2018.6 1218 L2040 1216.9 L2044.4 1215.4 L2068 1207.3 L2072.2 1206.8 L2093.7 1204 L2115.1 1200.8 L2125.8 1201.2 L2150 1202 L2150.5 1202.1 L2164.4 1205.1 L2190 1204.2 L2194.5 1204 L2200.9 1196.5 L2220.2 1190.1 L2222 1194.4 L2223 1194.3 L2234.5 1193.3 L2234.5 1236.2 L2223 1236.2 L2222 1233.5 L2220.2 1228.7 L2200.9 1231.4 L2194.5 1232.4 L2190 1233 L2164.4 1231.6 L2150.5 1230.9 L2150 1230.9 L2125.8 1233 L2115.1 1232.7 L2093.7 1232 L2072.2 1234.1 L2068 1235.2 L2044.4 1241.6 L2040 1241.3 L2018.6 1239.9 L1997.2 1238.4 L1971.5 1237.3 L1954.3 1242.7 L1924.3 1248 L1918 1249.1 L1915.7 1259.8 L1890 1260.9 L1865 1268.4 L1833 1271.6 L1812 1280.2 L1769 1292 L1726 1295.8 L1683 1299.5 L1660 1299.8 L1654.3 1300.8 L1641 1303.3 L1625.7 1304.9 L1617.6 1306.4 L1601.3 1306.4 L1593.1 1306.4 L1567.6 1306.8 L1557.4 1306.9 L1552.3 1307.5 L1540.1 1308.9 L1527.9 1307.4 L1520.7 1307 L1518.7 1306.9 L1511.6 1306.8 L1480 1306.4 L1473.8 1306.7 L1468.7 1306.9 L1464.7 1300.8 L1456.5 1306.2 L1452.4 1308.9 L1437.1 1312.5 L1434.1 1313.1 L1430 1314 L1386.5 1313.5 L1384.8 1322.5 L1375 1322.5 L695 1327.6 L199 1327.6 Z" fill="url(#g_magenta)"/><path d="M199 1327.6 L695 1327.6 L1375 1322.5 L1384.8 1322.5 L1386.5 1313.5 L1430 1314 L1434.1 1313.1 L1437.1 1312.5 L1452.4 1308.9 L1456.5 1306.2 L1464.7 1300.8 L1468.7 1306.9 L1473.8 1306.7 L1480 1306.4 L1518.7 1306.9 L1527.9 1307.4 L1531.9 1307.9 L1540.1 1308.9 L1552.3 1307.5 L1557.4 1306.9 L1567.6 1306.8 L1593.1 1306.4 L1617.6 1306.4 L1618.6 1306.2 L1625.7 1304.9 L1641 1303.3 L1654.3 1300.8 L1660 1299.8 L1683 1299.5 L1726 1295.8 L1769 1292 L1807 1281.6 L1812 1280.2 L1822 1276.1 L1833 1271.6 L1865 1268.4 L1890 1260.9 L1915.7 1259.8 L1918 1249.1 L1954.3 1242.7 L1967 1238.7 L1971.5 1237.3 L1997.2 1238.4 L2044.4 1241.6 L2061.5 1237 L2072.2 1234.1 L2093.7 1232 L2115 1232.7 L2125.8 1233 L2150.5 1230.9 L2190 1233 L2218 1229 L2220.2 1228.7 L2222 1233.5 L2223 1236.2 L2234.5 1236.2 L2234.5 1260.8 L2223 1259.8 L2222 1259.7 L2220.2 1256.3 L2218 1252.2 L2190 1254.4 L2150.5 1249 L2125.8 1248.3 L2115 1248 L2093.7 1248 L2072.2 1249.4 L2061.5 1250.1 L2044.4 1255.5 L1997.2 1253.3 L1971.5 1250.6 L1967 1250.1 L1954.3 1254.4 L1918 1258.7 L1915.7 1270.5 L1890 1276.9 L1865 1280.1 L1833 1282.5 L1822 1283.3 L1812 1288.3 L1807 1290.8 L1769 1300.5 L1726 1304.8 L1683 1308 L1660 1306.9 L1654.3 1304.9 L1641 1310 L1625.7 1310.5 L1618.6 1312.5 L1617.6 1312.5 L1593.1 1311.5 L1567.6 1309.4 L1557.4 1310 L1552.3 1314 L1540.1 1314 L1531.9 1314 L1527.9 1311.5 L1518.7 1311.3 L1480 1310.5 L1473.8 1308.4 L1468.7 1310 L1464.7 1304.3 L1456.5 1310.5 L1452.4 1313.5 L1437.1 1314.5 L1434.1 1317.6 L1430 1318.1 L1386.5 1315.5 L1384.8 1323.5 L1375 1323.5 L695 1327.6 L199 1327.6 Z" fill="url(#g_nonus)"/><path d="M199 1327.6 L695 1327.6 L1375 1323.5 L1384.8 1323.5 L1386.5 1315.5 L1430 1318.1 L1434.1 1317.6 L1436.1 1315.5 L1437.1 1314.5 L1452.4 1313.5 L1456.5 1310.5 L1460.6 1307.4 L1462.6 1305.9 L1464.7 1304.3 L1468.7 1310 L1473.8 1308.4 L1480 1310.5 L1527.9 1311.5 L1531.9 1314 L1552.3 1314 L1557.4 1310 L1567.6 1309.4 L1593.1 1311.5 L1618.6 1312.5 L1625.7 1310.5 L1641 1310 L1646.1 1308 L1654.3 1304.9 L1660 1306.9 L1683 1308 L1726 1304.8 L1769 1300.5 L1773 1299.5 L1807 1290.8 L1812 1288.3 L1822 1283.3 L1833 1282.5 L1865 1280.1 L1890 1276.9 L1915.7 1270.5 L1918 1258.7 L1954.3 1254.4 L1967 1250.1 L1971.5 1250.6 L1997.2 1253.3 L2044.4 1255.5 L2061.5 1250.1 L2072.2 1249.4 L2093.7 1248 L2115 1248 L2125.8 1248.3 L2150.5 1249 L2190 1254.4 L2218 1252.2 L2222 1259.7 L2234.5 1260.8 L2234.5 1277 L2222 1275.9 L2218 1269.5 L2190 1269.5 L2150.5 1264.1 L2125.8 1264.1 L2115 1262.7 L2093.7 1259.8 L2072.2 1260.9 L2061.5 1263.4 L2044.4 1267.3 L1997.2 1263 L1971.5 1260.9 L1967 1262 L1954.3 1265.2 L1918 1269.5 L1915.7 1281.3 L1890 1283.4 L1865 1284.5 L1833 1288.8 L1822 1293.3 L1812 1297.3 L1807 1298.4 L1773 1306 L1769 1306.4 L1726 1310.2 L1683 1314 L1660 1313.9 L1654.3 1314.3 L1646.1 1314.9 L1641 1317.5 L1625.7 1317.6 L1618.6 1317.6 L1593.1 1317.8 L1567.6 1317.9 L1557.4 1318 L1552.3 1318 L1531.9 1318.1 L1527.9 1318.1 L1480 1318.4 L1473.8 1318.4 L1468.7 1318.5 L1464.7 1318.5 L1462.6 1318.5 L1460.6 1320.6 L1456.5 1320.7 L1452.4 1320.8 L1437.1 1321.1 L1436.1 1321.1 L1434.1 1321.9 L1430 1323.6 L1386.5 1324.2 L1384.8 1324.2 L1375 1324.3 L695 1327.6 L199 1327.6 Z" fill="url(#g_orange)"/><path d="M199 1327.6 L695 1327.6 L1375 1324.3 L1430 1323.6 L1436.1 1321.1 L1460.6 1320.6 L1462.6 1318.5 L1641 1317.5 L1646.1 1314.9 L1660 1313.9 L1683 1314 L1769 1306.4 L1773 1306 L1812 1297.3 L1833 1288.8 L1865 1284.5 L1890 1283.4 L1915.7 1281.3 L1918 1269.5 L1954.3 1265.2 L1969 1261.5 L1971.5 1260.9 L1997.2 1263 L2044.4 1267.3 L2072.2 1260.9 L2093.7 1259.8 L2115 1262.7 L2125.8 1264.1 L2150.5 1264.1 L2190 1269.5 L2218 1269.5 L2222 1275.9 L2234.5 1277 L2234.5 1290.9 L2222 1290.6 L2218 1290.5 L2190 1289.8 L2150.5 1284.5 L2125.8 1284.5 L2115 1284.5 L2093.7 1285.5 L2072.2 1287.4 L2044.4 1289.8 L1997.2 1284.5 L1971.5 1282.5 L1969 1282.3 L1954.3 1286.6 L1918 1287.7 L1915.7 1298.4 L1890 1300.6 L1865 1301.6 L1833 1302.3 L1812 1302.7 L1773 1309.5 L1769 1310.2 L1683 1314.5 L1660 1314 L1646.1 1315 L1641 1317.6 L1462.6 1318.6 L1460.6 1320.7 L1436.1 1321.2 L1430 1323.7 L1375 1324.7 L695 1327.6 L199 1327.6 Z" fill="url(#g_purple)"/><path d="M199 1327.6 L695 1327.6 L1375 1324.7 L1430 1323.7 L1436.1 1321.2 L1460.6 1320.7 L1462.6 1318.6 L1641 1317.6 L1646.1 1315 L1650 1314.7 L1660 1314 L1683 1314.5 L1769 1310.2 L1812 1302.7 L1865 1301.6 L1890 1300.6 L1900 1299.7 L1915.7 1298.4 L1918 1287.7 L1954.3 1286.6 L1969 1282.3 L1997.2 1284.5 L2044.4 1289.8 L2093.7 1285.5 L2115 1284.5 L2125.8 1284.5 L2150.5 1284.5 L2157 1285.4 L2190 1289.8 L2234.5 1290.9 L2234.5 1303.8 L2190 1301.3 L2157 1299.5 L2150.5 1298.6 L2125.8 1295.2 L2115 1294.8 L2093.7 1294.1 L2044.4 1298.4 L1997.2 1293.8 L1969 1291 L1954.3 1295.2 L1918 1294.1 L1915.7 1304.9 L1900 1306 L1890 1306 L1865 1306 L1812 1307.5 L1769 1314.5 L1683 1318.5 L1660 1316.6 L1650 1317.6 L1646.1 1318.9 L1641 1320.7 L1462.6 1321.5 L1460.6 1321.6 L1436.1 1322.2 L1430 1325.2 L1375 1325.7 L695 1327.6 L199 1327.6 Z" fill="url(#g_blue)"/><path d="M199 1327.6 L695 1327.6 L1375 1325.7 L1430 1325.2 L1436.1 1322.2 L1462.6 1321.5 L1641 1320.7 L1650 1317.6 L1660 1316.6 L1683 1318.5 L1769 1314.5 L1773 1313.8 L1812 1307.5 L1865 1306 L1900 1306 L1915.7 1304.9 L1918 1294.1 L1954.3 1295.2 L1969 1291 L2018.6 1295.9 L2044.4 1298.4 L2093.7 1294.1 L2104.4 1294.5 L2125.8 1295.2 L2150.5 1298.6 L2157 1299.5 L2234.5 1303.8 L2234.5 1313.6 L2157 1312.5 L2150.5 1312.4 L2125.8 1311.2 L2104.4 1310.2 L2093.7 1310.3 L2044.4 1311 L2018.6 1311.3 L1969 1308.8 L1954.3 1308 L1918 1307 L1915.7 1317.7 L1900 1318.8 L1865 1319.4 L1812 1320.3 L1773 1321 L1769 1321 L1683 1322 L1660 1322.2 L1650 1322.7 L1641 1323.2 L1462.6 1323.2 L1436.1 1324.2 L1430 1326.8 L1375 1326.8 L695 1328.3 L199 1328.3 Z" fill="url(#g_steel)"/><path d="M199 1328.3 L695 1328.3 L1375 1326.8 L1430 1326.8 L1436.1 1324.2 L1462.6 1323.2 L1641 1323.2 L1660 1322.2 L1773 1321 L1900 1318.8 L1915.7 1317.7 L1918 1307 L1954.3 1308 L2018.6 1311.3 L2104.4 1310.2 L2150.5 1312.4 L2234.5 1313.6 L2234.5 1318.7 L2150.5 1317.9 L2104.4 1317.4 L2018.6 1316.6 L1954.3 1313.5 L1918 1311.8 L1915.7 1323 L1900 1323 L1773 1323.4 L1660 1323.7 L1641 1323.7 L1462.6 1324.2 L1436.1 1325.2 L1430 1327.3 L1375 1327.5 L695 1328.4 L199 1328.4 Z" fill="url(#g_brown)"/><path d="M199 1328.4 L695 1328.4 L1375 1327.5 L1430 1327.3 L1436.1 1325.2 L1462.6 1324.2 L1660 1323.7 L1900 1323 L1915.7 1323 L1918 1311.8 L2018.6 1316.6 L2234.5 1318.7 L2234.5 1323.8 L2018.6 1323 L1918 1316.6 L1915.7 1325.2 L1900 1325.2 L1660 1328.8 L1462.6 1328.5 L1436.1 1328.7 L1430 1328.8 L1375 1329.3 L695 1329.2 L199 1329.2 Z" fill="url(#g_lgreen)"/><path d="M199 1329.2 L695 1329.2 L1375 1329.3 L1462.6 1328.5 L1660 1328.8 L1900 1325.2 L1915.7 1325.2 L1918 1316.6 L2018.6 1323 L2234.5 1323.8 L2234.5 1330 L2018.6 1330 L1918 1330 L1915.7 1330 L1900 1330 L1660 1330 L1462.6 1330 L1375 1330 L695 1330 L199 1330 Z" fill="url(#g_yellow)"/><path d="M199 1304.6 L240 1302.3 L276 1301.7 L314 1302.8 L351 1300.5 L450 1301 L560 1301.4 L596 1298.7 L695 1298.7 L1375 1246.2 L1384.8 1245.8 L1386.5 1232 L1390.1 1229 L1395.4 1226.7 L1412 1223 L1424.6 1215.2 L1430 1220.1 L1437.1 1220.1 L1443.3 1220.5 L1448.6 1223.6 L1454.8 1221.9 L1456.6 1218.8 L1464.5 1214.8 L1467.2 1219.2 L1475.2 1216.1 L1499.1 1216.1 L1506.2 1210.3 L1513.3 1210.8 L1515.1 1213 L1520.4 1205.9 L1527.5 1203.2 L1539.9 1208.1 L1546.1 1197 L1554.1 1196.2 L1563 1189.1 L1567.4 1178.9 L1572.9 1180.8 L1581.4 1179.3 L1591.5 1182.2 L1598.6 1167.9 L1604.3 1167.9 L1610 1164.7 L1617.2 1165 L1620 1158.6 L1624.3 1157.2 L1625.8 1151.5 L1632.9 1151.8 L1637.2 1144.3 L1642.2 1143.6 L1645.8 1138.6 L1651.5 1133.2 L1657.2 1132.9 L1660.8 1135.7 L1665 1132.2 L1669.4 1131.5 L1675.8 1126.4 L1686.5 1124.7 L1689.4 1122.2 L1693.7 1122.8 L1697.4 1119 L1703.7 1117.5 L1709.2 1117.8 L1711.7 1115.3 L1719.8 1115.9 L1723.5 1111.9 L1732.8 1111 L1737.2 1107.2 L1743.4 1107.6 L1749.6 1105.4 L1753.9 1102.9 L1759.5 1102.3 L1763.2 1099.8 L1768.2 1097.9 L1773.2 1097.6 L1776.9 1094.8 L1779.4 1091.7 L1781.2 1093.9 L1782.5 1099.8 L1785 1100.4 L1787.5 1104.8 L1793 1101.7 L1799.2 1102 L1804.8 1099.8 L1806.1 1097.3 L1813.5 1096.4 L1816 1090.5 L1820.4 1085.8 L1824.1 1084.9 L1828.4 1078.4 L1831.9 1070.7 L1838.7 1070.2 L1844.7 1060 L1850.7 1060 L1852.5 1053 L1866.2 1050.5 L1867.9 1051.8 L1871.3 1048.4 L1878.2 1048 L1883.3 1044.9 L1885.9 1037.6 L1893.6 1036.3 L1907.4 1034.6 L1909 1037.2 L1910.8 1032.1 L1915.9 1033.3 L1917.6 1010.6 L1922 1002.9 L1924.5 987.5 L1928.8 984.4 L1936.5 975.9 L1940 979.3 L1946.8 972.4 L1950.2 970.7 L1952 964.3 L1955 965.1 L1958.7 957.7 L1961.2 958.9 L1964.9 953.4 L1968.7 954 L1971.8 947.1 L1976.1 948.1 L1978 944.7 L1983.5 945.3 L1986.6 949 L1993.5 950.2 L1996.6 953.7 L2002.2 949.6 L2007.7 953.3 L2009.6 958.6 L2012.7 953.3 L2018.9 958 L2023.3 955.8 L2028.8 950.2 L2035.7 949.6 L2038.8 952.7 L2042.5 945.3 L2049.3 943.7 L2056.8 938.8 L2061.7 939.1 L2064.8 932.9 L2069.2 930.4 L2071.7 932.3 L2074.8 927.6 L2078.5 927 L2080.4 929.8 L2084.7 931 L2087.2 924.8 L2089.7 928.5 L2094 925 L2095.6 924.9 L2099.3 924 L2102.1 919.8 L2106.7 918.8 L2111.4 919.8 L2116 912.8 L2125.3 913.3 L2129 905.4 L2133.7 887.7 L2140.2 884.9 L2142 881.2 L2145.8 865 L2149.5 873.8 L2153.2 871.9 L2156.9 866.3 L2159.7 874.7 L2164.3 871 L2168.1 862.2 L2172.7 865.4 L2180.1 859.4 L2182.9 861.2 L2189.4 856.6 L2196 850.5 L2198.7 841.2 L2204.3 833.8 L2206.2 829.6 L2209 835.7 L2217.3 831.5 L2219.2 827.3 L2224.8 820.8 L2230.3 819.4 L2233.1 814.3 L2234.5 815.5" fill="none" stroke="#1b3e72" stroke-width="4.5" stroke-linejoin="round" stroke-linecap="butt"/><path d="M199 1312 L695 1311.6 L1375 1301 L1384.8 1301 L1386.5 1292.3 L1400 1294 L1412 1296 L1430 1291.6 L1436.1 1290.6 L1438.2 1288.5 L1452.4 1286.5 L1456.5 1282.9 L1460.6 1281.9 L1464.7 1276.8 L1468.7 1282.4 L1473.8 1280.9 L1480 1282.4 L1506.5 1281.4 L1514.6 1282.9 L1518.7 1282.9 L1520.7 1278.9 L1526.8 1276.8 L1531.9 1278.9 L1540.1 1280.4 L1552.3 1278.3 L1557.4 1274.3 L1567.6 1272.7 L1582.9 1273.3 L1593.1 1274.3 L1599.2 1270.2 L1615.5 1268.7 L1623.7 1265.6 L1626.8 1261.5 L1644.1 1260.5 L1653 1255 L1661 1256.6 L1683 1249.1 L1726 1240.5 L1769 1229.8 L1812 1215.9 L1833 1204 L1865 1199.8 L1876 1194.4 L1890 1188 L1915.7 1183.7 L1918 1166.5 L1924.3 1151.5 L1941.5 1140.8 L1952.2 1130 L1965 1121.5 L1978 1118.3 L1986.5 1122.6 L2001.5 1119.3 L2018.6 1128 L2027.2 1120.4 L2044.4 1110.8 L2057.2 1103.3 L2068 1097.9 L2089.4 1094.7 L2104.4 1087.2 L2116 1085.8 L2123.7 1086.1 L2134.4 1074.3 L2145.2 1056.1 L2149.5 1064.7 L2157 1056.1 L2161 1063.6 L2166.6 1056 L2183.7 1058.2 L2193.5 1051.5 L2200 1039.3 L2206.8 1032.6 L2211 1036 L2220 1030.4 L2234.5 1028.2" fill="none" stroke="#d5a43a" stroke-width="2.6" stroke-linejoin="round" stroke-linecap="butt"/><path d="M199 1327.6 L695 1327.6 L1375 1320.8 L1384.8 1320.8 L1386.5 1311.8 L1430 1311.5 L1434.1 1312 L1437.1 1308.9 L1452.4 1306.4 L1456.5 1302.8 L1464.7 1297.2 L1468.7 1302.8 L1473.8 1301.3 L1480 1303.8 L1511.6 1303.8 L1518.7 1304.9 L1520.7 1299.8 L1523.8 1298.7 L1527.9 1298.7 L1540.1 1301.3 L1552.3 1300.3 L1557.4 1297.7 L1567.6 1296.2 L1593.1 1297.7 L1601.3 1295.7 L1617.6 1295.2 L1625.7 1289.1 L1641 1287.5 L1654.3 1280.9 L1660 1281.4 L1683 1277 L1726 1268.4 L1769 1259.8 L1812 1250.2 L1833 1237.3 L1865 1235.1 L1890 1226.6 L1915.7 1222.3 L1918 1205.1 L1924.3 1193.3 L1937.2 1188 L1954.3 1190.1 L1971.5 1175.1 L1984.3 1177.2 L1999.3 1178.3 L2018.6 1184.8 L2040 1179.4 L2055.1 1166.5 L2074.4 1159 L2091.5 1162.2 L2104.4 1156.9 L2125.8 1159 L2150.5 1151.5 L2162.3 1156.9 L2194.5 1153.7 L2205.2 1145 L2220.2 1138.6 L2234.5 1134.4" fill="none" stroke="#6e993a" stroke-width="2.6" stroke-linejoin="round" stroke-linecap="butt"/><path d="M199 1327.6 L695 1327.6 L1375 1320.8 L1384.8 1320.8 L1386.5 1311.8 L1430 1311.5 L1434.1 1312 L1437.1 1308.9 L1452.4 1306.4 L1456.5 1302.8 L1464.7 1297.2 L1468.7 1302.8 L1473.8 1301.3 L1480 1303.8 L1511.6 1303.8 L1518.7 1304.9 L1520.7 1299.8 L1527.9 1299.2 L1540.1 1303.3 L1552.3 1302.3 L1557.4 1298.7 L1567.6 1297.7 L1593.1 1299.8 L1601.3 1298.7 L1617.6 1299.8 L1625.7 1293.6 L1641 1292.6 L1654.3 1286.5 L1660 1288.5 L1683 1284.5 L1726 1280.2 L1769 1274.8 L1812 1264.1 L1833 1254.5 L1865 1253.4 L1890 1247 L1915.7 1243.7 L1918 1228.7 L1924.3 1221.2 L1954.3 1221.2 L1971.5 1212.6 L1997.2 1212.6 L2018.6 1218 L2040 1216.9 L2068 1207.3 L2093.7 1204 L2115.1 1200.8 L2150 1202 L2164.4 1205.1 L2194.5 1204 L2200.9 1196.5 L2220.2 1190.1 L2222 1194.4 L2234.5 1193.3" fill="none" stroke="#bd2e84" stroke-width="2.6" stroke-linejoin="round" stroke-linecap="butt"/><path d="M199 1327.6 L695 1327.6 L1375 1322.5 L1384.8 1322.5 L1386.5 1313.5 L1430 1314 L1437.1 1312.5 L1452.4 1308.9 L1464.7 1300.8 L1468.7 1306.9 L1480 1306.4 L1518.7 1306.9 L1527.9 1307.4 L1540.1 1308.9 L1557.4 1306.9 L1593.1 1306.4 L1617.6 1306.4 L1625.7 1304.9 L1641 1303.3 L1660 1299.8 L1683 1299.5 L1769 1292 L1812 1280.2 L1833 1271.6 L1865 1268.4 L1890 1260.9 L1915.7 1259.8 L1918 1249.1 L1954.3 1242.7 L1971.5 1237.3 L1997.2 1238.4 L2044.4 1241.6 L2072.2 1234.1 L2093.7 1232 L2125.8 1233 L2150.5 1230.9 L2190 1233 L2220.2 1228.7 L2223 1236.2 L2234.5 1236.2" fill="none" stroke="#b3c5dd" stroke-width="2.6" stroke-linejoin="round" stroke-linecap="butt"/><path d="M199 1327.6 L695 1327.6 L1375 1323.5 L1384.8 1323.5 L1386.5 1315.5 L1430 1318.1 L1434.1 1317.6 L1437.1 1314.5 L1452.4 1313.5 L1456.5 1310.5 L1464.7 1304.3 L1468.7 1310 L1473.8 1308.4 L1480 1310.5 L1527.9 1311.5 L1531.9 1314 L1552.3 1314 L1557.4 1310 L1567.6 1309.4 L1593.1 1311.5 L1618.6 1312.5 L1625.7 1310.5 L1641 1310 L1654.3 1304.9 L1660 1306.9 L1683 1308 L1726 1304.8 L1769 1300.5 L1807 1290.8 L1822 1283.3 L1865 1280.1 L1890 1276.9 L1915.7 1270.5 L1918 1258.7 L1954.3 1254.4 L1967 1250.1 L1997.2 1253.3 L2044.4 1255.5 L2061.5 1250.1 L2093.7 1248 L2115 1248 L2150.5 1249 L2190 1254.4 L2218 1252.2 L2222 1259.7 L2234.5 1260.8" fill="none" stroke="#ef5024" stroke-width="2.6" stroke-linejoin="round" stroke-linecap="butt"/><path d="M199 1327.6 L695 1327.6 L1375 1324.3 L1430 1323.6 L1436.1 1321.1 L1460.6 1320.6 L1462.6 1318.5 L1641 1317.5 L1646.1 1314.9 L1660 1313.9 L1683 1314 L1773 1306 L1812 1297.3 L1833 1288.8 L1865 1284.5 L1890 1283.4 L1915.7 1281.3 L1918 1269.5 L1954.3 1265.2 L1971.5 1260.9 L1997.2 1263 L2044.4 1267.3 L2072.2 1260.9 L2093.7 1259.8 L2125.8 1264.1 L2150.5 1264.1 L2190 1269.5 L2218 1269.5 L2222 1275.9 L2234.5 1277" fill="none" stroke="#7c3be6" stroke-width="2.6" stroke-linejoin="round" stroke-linecap="butt"/><path d="M199 1327.6 L695 1327.6 L1375 1324.7 L1430 1323.7 L1436.1 1321.2 L1460.6 1320.7 L1462.6 1318.6 L1641 1317.6 L1646.1 1315 L1660 1314 L1683 1314.5 L1769 1310.2 L1812 1302.7 L1865 1301.6 L1890 1300.6 L1915.7 1298.4 L1918 1287.7 L1954.3 1286.6 L1969 1282.3 L1997.2 1284.5 L2044.4 1289.8 L2093.7 1285.5 L2115 1284.5 L2150.5 1284.5 L2190 1289.8 L2234.5 1290.9" fill="none" stroke="#0a00f0" stroke-width="2.7" stroke-linejoin="round" stroke-linecap="butt"/><path d="M199 1327.6 L695 1327.6 L1375 1325.7 L1430 1325.2 L1436.1 1322.2 L1462.6 1321.5 L1641 1320.7 L1650 1317.6 L1660 1316.6 L1683 1318.5 L1769 1314.5 L1812 1307.5 L1865 1306 L1900 1306 L1915.7 1304.9 L1918 1294.1 L1954.3 1295.2 L1969 1291 L2044.4 1298.4 L2093.7 1294.1 L2125.8 1295.2 L2157 1299.5 L2234.5 1303.8" fill="none" stroke="#4f7ba8" stroke-width="3.0" stroke-linejoin="round" stroke-linecap="butt"/><path d="M199 1328.3 L695 1328.3 L1375 1326.8 L1430 1326.8 L1436.1 1324.2 L1462.6 1323.2 L1641 1323.2 L1660 1322.2 L1773 1321 L1900 1318.8 L1915.7 1317.7 L1918 1307 L1954.3 1308 L2018.6 1311.3 L2104.4 1310.2 L2150.5 1312.4 L2234.5 1313.6" fill="none" stroke="#cc6b2c" stroke-width="2.6" stroke-linejoin="round" stroke-linecap="butt"/><path d="M199 1328.4 L695 1328.4 L1375 1327.5 L1430 1327.3 L1436.1 1325.2 L1462.6 1324.2 L1660 1323.7 L1900 1323 L1915.7 1323 L1918 1311.8 L2018.6 1316.6 L2234.5 1318.7" fill="none" stroke="#bfeabb" stroke-width="2.6" stroke-linejoin="round" stroke-linecap="butt"/><path d="M199 1329.2 L695 1329.2 L1375 1329.3 L1462.6 1328.5 L1660 1328.8 L1900 1325.2 L1915.7 1325.2 L1918 1316.6 L2018.6 1323 L2234.5 1323.8" fill="none" stroke="#f6d43e" stroke-width="2.6" stroke-linejoin="round" stroke-linecap="butt"/><line x1="197" y1="1331" x2="2236" y2="1331" stroke="#dde3ee" stroke-width="2"/><line x1="197.2" y1="767" x2="2236" y2="767" stroke="#42547d" stroke-opacity="0.5" stroke-width="1.8" stroke-dasharray="7.8 6.2"/><line x1="197.2" y1="860.8" x2="2236" y2="860.8" stroke="#42547d" stroke-opacity="0.5" stroke-width="1.8" stroke-dasharray="7.8 6.2"/><line x1="197.2" y1="954.6" x2="2236" y2="954.6" stroke="#42547d" stroke-opacity="0.5" stroke-width="1.8" stroke-dasharray="7.8 6.2"/><line x1="197.2" y1="1048.6" x2="2236" y2="1048.6" stroke="#42547d" stroke-opacity="0.5" stroke-width="1.8" stroke-dasharray="7.8 6.2"/><line x1="197.2" y1="1142.6" x2="2236" y2="1142.6" stroke="#42547d" stroke-opacity="0.5" stroke-width="1.8" stroke-dasharray="7.8 6.2"/><line x1="197.2" y1="1236.4" x2="2236" y2="1236.4" stroke="#42547d" stroke-opacity="0.5" stroke-width="1.8" stroke-dasharray="7.8 6.2"/><line x1="273.8" y1="766" x2="273.8" y2="1330" stroke="#42547d" stroke-opacity="0.5" stroke-width="1.8" stroke-dasharray="7.8 6.2"/><line x1="273.8" y1="1332" x2="273.8" y2="1349.5" stroke="#a3acc1" stroke-width="2"/><line x1="503.8" y1="766" x2="503.8" y2="1330" stroke="#42547d" stroke-opacity="0.5" stroke-width="1.8" stroke-dasharray="7.8 6.2"/><line x1="503.8" y1="1332" x2="503.8" y2="1349.5" stroke="#a3acc1" stroke-width="2"/><line x1="730" y1="766" x2="730" y2="1330" stroke="#42547d" stroke-opacity="0.5" stroke-width="1.8" stroke-dasharray="7.8 6.2"/><line x1="730" y1="1332" x2="730" y2="1349.5" stroke="#a3acc1" stroke-width="2"/><line x1="956" y1="766" x2="956" y2="1330" stroke="#42547d" stroke-opacity="0.5" stroke-width="1.8" stroke-dasharray="7.8 6.2"/><line x1="956" y1="1332" x2="956" y2="1349.5" stroke="#a3acc1" stroke-width="2"/><line x1="1186" y1="766" x2="1186" y2="1330" stroke="#42547d" stroke-opacity="0.5" stroke-width="1.8" stroke-dasharray="7.8 6.2"/><line x1="1186" y1="1332" x2="1186" y2="1349.5" stroke="#a3acc1" stroke-width="2"/><line x1="1412" y1="766" x2="1412" y2="1330" stroke="#d3dbe8" stroke-width="2" stroke-dasharray="7.8 6.2"/><line x1="1412" y1="1332" x2="1412" y2="1349.5" stroke="#d3dbe8" stroke-width="2"/><line x1="1636" y1="766" x2="1636" y2="1330" stroke="#42547d" stroke-opacity="0.5" stroke-width="1.8" stroke-dasharray="7.8 6.2"/><line x1="1636" y1="1332" x2="1636" y2="1349.5" stroke="#a3acc1" stroke-width="2"/><line x1="1866" y1="766" x2="1866" y2="1330" stroke="#42547d" stroke-opacity="0.5" stroke-width="1.8" stroke-dasharray="7.8 6.2"/><line x1="1866" y1="1332" x2="1866" y2="1349.5" stroke="#a3acc1" stroke-width="2"/><line x1="2094" y1="766" x2="2094" y2="1330" stroke="#42547d" stroke-opacity="0.5" stroke-width="1.8" stroke-dasharray="7.8 6.2"/><line x1="2094" y1="1332" x2="2094" y2="1349.5" stroke="#a3acc1" stroke-width="2"/><circle cx="1412" cy="1223" r="19.7" fill="#1b3e72" fill-opacity="0.25"/><circle cx="1412" cy="1223" r="11.2" fill="#1b3e72" stroke="#fff" stroke-width="2.4"/><circle cx="1412" cy="1296.4" r="19.6" fill="#d5a43a" fill-opacity="0.22"/><circle cx="1412" cy="1308" r="19.5" fill="#ef6a40" fill-opacity="0.25"/><circle cx="1412" cy="1326.5" r="19.5" fill="#7c3be6" fill-opacity="0.12" stroke="#7c3be6" stroke-opacity="0.45" stroke-width="1.5"/><circle cx="1412" cy="1330" r="19.5" fill="#6b5a40" fill-opacity="0.35"/><circle cx="1412" cy="1331" r="20.5" fill="#f6d43e" fill-opacity="0.18"/><path d="M1412 1283.7 L1424.7 1296.4 L1412 1309.1 L1399.3 1296.4 Z" fill="#d5a43a" stroke="#fff" stroke-width="2.6" stroke-linejoin="miter"/><rect x="1399" y="1313.5" width="26" height="26" rx="2" fill="#f4eec4" fill-opacity="0.9" stroke="#fff" stroke-opacity="0.6" stroke-width="1.5"/><circle cx="1412" cy="1329" r="11.5" fill="#c6e6b8" fill-opacity="0.9"/><path d="M1412 1317.3 L1424.5 1329.8 L1412 1342.3 L1399.5 1329.8 Z" fill="#f6d43e" stroke="#fff" stroke-width="2.6" stroke-linejoin="miter"/></svg>

<div style="position:absolute;right:2090.0px;top:753.3px;font-size:29px;line-height:29px;color:#94a3b8;font-weight:400;letter-spacing:0.2px;font-family:'Liberation Sans', sans-serif;white-space:nowrap;text-align:right">$30.0B</div>
<div style="position:absolute;right:2090.0px;top:847.1px;font-size:29px;line-height:29px;color:#94a3b8;font-weight:400;letter-spacing:0.2px;font-family:'Liberation Sans', sans-serif;white-space:nowrap;text-align:right">$25.0B</div>
<div style="position:absolute;right:2090.0px;top:940.9px;font-size:29px;line-height:29px;color:#94a3b8;font-weight:400;letter-spacing:0.2px;font-family:'Liberation Sans', sans-serif;white-space:nowrap;text-align:right">$20.0B</div>
<div style="position:absolute;right:2090.0px;top:1034.9px;font-size:29px;line-height:29px;color:#94a3b8;font-weight:400;letter-spacing:0.2px;font-family:'Liberation Sans', sans-serif;white-space:nowrap;text-align:right">$15.0B</div>
<div style="position:absolute;right:2090.0px;top:1128.9px;font-size:29px;line-height:29px;color:#94a3b8;font-weight:400;letter-spacing:0.2px;font-family:'Liberation Sans', sans-serif;white-space:nowrap;text-align:right">$10.0B</div>
<div style="position:absolute;right:2090.0px;top:1222.7px;font-size:29px;line-height:29px;color:#94a3b8;font-weight:400;letter-spacing:0.2px;font-family:'Liberation Sans', sans-serif;white-space:nowrap;text-align:right">$5.0B</div>
<div style="position:absolute;right:2090.0px;top:1316.6px;font-size:29px;line-height:29px;color:#94a3b8;font-weight:400;letter-spacing:0.2px;font-family:'Liberation Sans', sans-serif;white-space:nowrap;text-align:right">$0.00</div>
<div style="position:absolute;left:73.8px;width:400px;text-align:center;top:1363.6px;font-size:29px;line-height:29px;color:#94a3b8;font-weight:400;letter-spacing:-0.3px;font-family:'Liberation Sans', sans-serif;white-space:nowrap">5/1/23</div>
<div style="position:absolute;left:303.8px;width:400px;text-align:center;top:1363.6px;font-size:29px;line-height:29px;color:#94a3b8;font-weight:400;letter-spacing:-0.3px;font-family:'Liberation Sans', sans-serif;white-space:nowrap">9/1/23</div>
<div style="position:absolute;left:530.0px;width:400px;text-align:center;top:1363.6px;font-size:29px;line-height:29px;color:#94a3b8;font-weight:400;letter-spacing:-0.3px;font-family:'Liberation Sans', sans-serif;white-space:nowrap">1/1/24</div>
<div style="position:absolute;left:756.0px;width:400px;text-align:center;top:1363.6px;font-size:29px;line-height:29px;color:#94a3b8;font-weight:400;letter-spacing:-0.3px;font-family:'Liberation Sans', sans-serif;white-space:nowrap">5/1/24</div>
<div style="position:absolute;left:986.0px;width:400px;text-align:center;top:1363.6px;font-size:29px;line-height:29px;color:#94a3b8;font-weight:400;letter-spacing:-0.3px;font-family:'Liberation Sans', sans-serif;white-space:nowrap">9/1/24</div>
<div style="position:absolute;left:1212.0px;width:400px;text-align:center;top:1363.6px;font-size:29px;line-height:29px;color:#94a3b8;font-weight:400;letter-spacing:-0.3px;font-family:'Liberation Sans', sans-serif;white-space:nowrap">1/1/25</div>
<div style="position:absolute;left:1436.0px;width:400px;text-align:center;top:1363.6px;font-size:29px;line-height:29px;color:#94a3b8;font-weight:400;letter-spacing:-0.3px;font-family:'Liberation Sans', sans-serif;white-space:nowrap">5/1/25</div>
<div style="position:absolute;left:1666.0px;width:400px;text-align:center;top:1363.6px;font-size:29px;line-height:29px;color:#94a3b8;font-weight:400;letter-spacing:-0.3px;font-family:'Liberation Sans', sans-serif;white-space:nowrap">9/1/25</div>
<div style="position:absolute;left:1894.0px;width:400px;text-align:center;top:1363.6px;font-size:29px;line-height:29px;color:#94a3b8;font-weight:400;letter-spacing:-0.3px;font-family:'Liberation Sans', sans-serif;white-space:nowrap">1/1/26</div>

<div style="position:absolute;left:695px;top:794.5px;width:676px;height:700px;background:#fff;border:2px solid #d8dfeb;border-radius:8px"></div>
<div style="position:absolute;left:729.5px;top:834.4px;font-size:42px;line-height:42px;color:#2e2f33;font-weight:400;letter-spacing:1.8px;font-family:'Liberation Sans', sans-serif;white-space:nowrap;">1/1/25</div>
<div style="position:absolute;right:915.0px;top:845.1px;font-size:28.6px;line-height:28.6px;color:#2e2f33;font-weight:400;letter-spacing:0px;font-family:'Liberation Mono', monospace;white-space:nowrap;text-align:right">$5,691,348,491</div>
<div style="position:absolute;left:727px;top:894px;width:614px;height:2px;background:#d6ddea"></div>
<div style="position:absolute;left:727px;top:921.0px;width:24px;height:24px;border-radius:50%;background:#1b3e72"></div>
<div style="position:absolute;left:767.0px;top:919.8px;font-size:28.4px;line-height:28.4px;color:#2e2f33;font-weight:400;letter-spacing:0.25px;font-family:'Liberation Sans', sans-serif;white-space:nowrap;">US Treasury Debt</div>
<div style="position:absolute;right:915.0px;top:921.9px;font-size:28.6px;line-height:28.6px;color:#2e2f33;font-weight:400;letter-spacing:0px;font-family:'Liberation Mono', monospace;white-space:nowrap;text-align:right">$3,899,970,708</div>
<div style="position:absolute;left:727px;top:963.0px;width:24px;height:24px;border-radius:50%;background:#d5a43a"></div>
<div style="position:absolute;left:767.0px;top:961.8px;font-size:28.4px;line-height:28.4px;color:#2e2f33;font-weight:400;letter-spacing:0.25px;font-family:'Liberation Sans', sans-serif;white-space:nowrap;">Commodities</div>
<div style="position:absolute;right:915.0px;top:963.9px;font-size:28.6px;line-height:28.6px;color:#2e2f33;font-weight:400;letter-spacing:0px;font-family:'Liberation Mono', monospace;white-space:nowrap;text-align:right">$1,020,394,285</div>
<div style="position:absolute;left:727px;top:1005.0px;width:24px;height:24px;border-radius:50%;background:#bd2e84"></div>
<div style="position:absolute;left:767.0px;top:1003.8px;font-size:28.4px;line-height:28.4px;color:#2e2f33;font-weight:400;letter-spacing:0.25px;font-family:'Liberation Sans', sans-serif;white-space:nowrap;">Specialty Finance</div>
<div style="position:absolute;right:915.0px;top:1005.9px;font-size:28.6px;line-height:28.6px;color:#2e2f33;font-weight:400;letter-spacing:0px;font-family:'Liberation Mono', monospace;white-space:nowrap;text-align:right">$130,743,679</div>
<div style="position:absolute;left:727px;top:1047.0px;width:24px;height:24px;border-radius:50%;background:#b3c5dd"></div>
<div style="position:absolute;left:767.0px;top:1045.8px;font-size:28.4px;line-height:28.4px;color:#2e2f33;font-weight:400;letter-spacing:0.25px;font-family:'Liberation Sans', sans-serif;white-space:nowrap;">non-US Government Debt</div>
<div style="position:absolute;right:915.0px;top:1047.9px;font-size:28.6px;line-height:28.6px;color:#2e2f33;font-weight:400;letter-spacing:0px;font-family:'Liberation Mono', monospace;white-space:nowrap;text-align:right">$96,816,261</div>
<div style="position:absolute;left:727px;top:1089.0px;width:24px;height:24px;border-radius:50%;background:#ee5a2a"></div>
<div style="position:absolute;left:767.0px;top:1087.8px;font-size:28.4px;line-height:28.4px;color:#2e2f33;font-weight:400;letter-spacing:0.25px;font-family:'Liberation Sans', sans-serif;white-space:nowrap;">Stocks</div>
<div style="position:absolute;right:915.0px;top:1089.9px;font-size:28.6px;line-height:28.6px;color:#2e2f33;font-weight:400;letter-spacing:0px;font-family:'Liberation Mono', monospace;white-space:nowrap;text-align:right">$291,305,147</div>
<div style="position:absolute;left:727px;top:1131.0px;width:24px;height:24px;border-radius:50%;background:#7d34de"></div>
<div style="position:absolute;left:767.0px;top:1129.8px;font-size:28.4px;line-height:28.4px;color:#2e2f33;font-weight:400;letter-spacing:0.25px;font-family:'Liberation Sans', sans-serif;white-space:nowrap;">Corporate Credit</div>
<div style="position:absolute;right:915.0px;top:1131.9px;font-size:28.6px;line-height:28.6px;color:#2e2f33;font-weight:400;letter-spacing:0px;font-family:'Liberation Mono', monospace;white-space:nowrap;text-align:right">$28,654,622</div>
<div style="position:absolute;left:727px;top:1173.0px;width:24px;height:24px;border-radius:50%;background:#0a00e8"></div>
<div style="position:absolute;left:767.0px;top:1171.8px;font-size:28.4px;line-height:28.4px;color:#2e2f33;font-weight:400;letter-spacing:0.25px;font-family:'Liberation Sans', sans-serif;white-space:nowrap;">Diversified Credit</div>
<div style="position:absolute;right:915.0px;top:1173.9px;font-size:28.6px;line-height:28.6px;color:#2e2f33;font-weight:400;letter-spacing:0px;font-family:'Liberation Mono', monospace;white-space:nowrap;text-align:right">$7,259,513</div>
<div style="position:absolute;left:727px;top:1215.0px;width:24px;height:24px;border-radius:50%;background:#5581b1"></div>
<div style="position:absolute;left:767.0px;top:1213.8px;font-size:28.4px;line-height:28.4px;color:#2e2f33;font-weight:400;letter-spacing:0.25px;font-family:'Liberation Sans', sans-serif;white-space:nowrap;">Active Strategies</div>
<div style="position:absolute;right:915.0px;top:1215.9px;font-size:28.6px;line-height:28.6px;color:#2e2f33;font-weight:400;letter-spacing:0px;font-family:'Liberation Mono', monospace;white-space:nowrap;text-align:right">$108,908,813</div>
<div style="position:absolute;left:727px;top:1257.0px;width:24px;height:24px;border-radius:50%;background:#c46c32"></div>
<div style="position:absolute;left:767.0px;top:1255.8px;font-size:28.4px;line-height:28.4px;color:#2e2f33;font-weight:400;letter-spacing:0.25px;font-family:'Liberation Sans', sans-serif;white-space:nowrap;">Real Estate</div>
<div style="position:absolute;right:915.0px;top:1257.9px;font-size:28.6px;line-height:28.6px;color:#2e2f33;font-weight:400;letter-spacing:0px;font-family:'Liberation Mono', monospace;white-space:nowrap;text-align:right">$28,901,493</div>
<div style="position:absolute;left:727px;top:1299.0px;width:24px;height:24px;border-radius:50%;background:#c6ecc0"></div>
<div style="position:absolute;left:767.0px;top:1297.8px;font-size:28.4px;line-height:28.4px;color:#2e2f33;font-weight:400;letter-spacing:0.25px;font-family:'Liberation Sans', sans-serif;white-space:nowrap;">Venture Capital</div>
<div style="position:absolute;right:915.0px;top:1299.9px;font-size:28.6px;line-height:28.6px;color:#2e2f33;font-weight:400;letter-spacing:0px;font-family:'Liberation Mono', monospace;white-space:nowrap;text-align:right">$74,358,279</div>
<div style="position:absolute;left:727px;top:1341.0px;width:24px;height:24px;border-radius:50%;background:#f8d74a"></div>
<div style="position:absolute;left:767.0px;top:1339.8px;font-size:28.4px;line-height:28.4px;color:#2e2f33;font-weight:400;letter-spacing:0.25px;font-family:'Liberation Sans', sans-serif;white-space:nowrap;">Private Equity</div>
<div style="position:absolute;right:915.0px;top:1341.9px;font-size:28.6px;line-height:28.6px;color:#2e2f33;font-weight:400;letter-spacing:0px;font-family:'Liberation Mono', monospace;white-space:nowrap;text-align:right">$4,035,691</div>

<div style="position:absolute;left:2209px;top:1308px;width:97px;height:97px;border-radius:50%;background:#ecdfc2;box-shadow:0 2px 14px rgba(0,0,0,0.18)"></div>
<div style="position:absolute;left:2236px;top:1332px;width:60px;height:43px;border-radius:8px;background:#16171b"></div>
<svg style="position:absolute;left:2236px;top:1332px" width="20" height="43"><path d="M6.5 29.5 Q14 35 22 36" fill="none" stroke="#ecdfc2" stroke-width="2.4" stroke-linecap="round"/></svg>

</div>
</body></html>
